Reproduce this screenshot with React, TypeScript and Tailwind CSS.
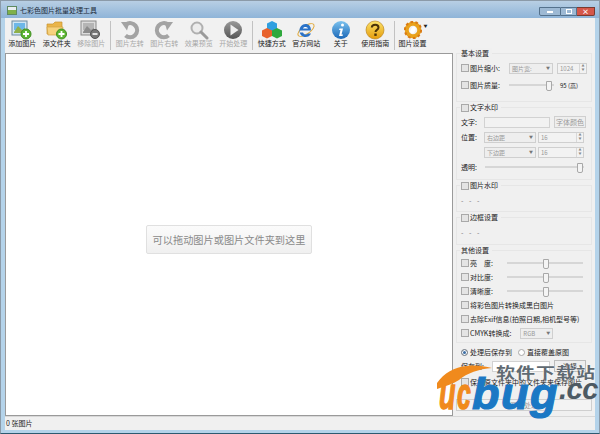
import type { ReactNode } from "react";

const FONT = "font-['Noto_Sans_CJK_SC','Liberation_Sans',sans-serif]";

function AddPicIcon() {
  return (
    <svg width="22" height="20" viewBox="0 0 22 20">
      <rect x="1" y="1" width="15" height="14" fill="#cfe6f5" stroke="#6f8aa0" />
      <rect x="3" y="3" width="11" height="7" fill="#6db7e8" />
      <path d="M3 12 L7 6 L11 10 L14 8 V13 H3Z" fill="#8fb04a" />
      <circle cx="15" cy="14" r="5" fill="#5cb531" stroke="#3f8f1f" />
      <path d="M15 11v6M12 14h6" stroke="#fff" strokeWidth="1.8" />
    </svg>
  );
}

function FolderIcon() {
  return (
    <svg width="22" height="20" viewBox="0 0 22 20">
      <path d="M1 4 H7 L9 2 H16 V14 H1Z" fill="#eab54a" stroke="#c8922f" strokeWidth=".7" />
      <path d="M1 7 H17 L16 15 H2Z" fill="#f6d27e" stroke="#d3a244" strokeWidth=".7" />
      <circle cx="15.5" cy="14" r="5" fill="#5cb531" stroke="#3f8f1f" />
      <path d="M15.500 11v6M12.500 14h6" stroke="#fff" strokeWidth="1.8" />
    </svg>
  );
}

function RemoveIcon() {
  return (
    <svg width="22" height="20" viewBox="0 0 22 20">
      <rect x="1" y="1" width="15" height="14" fill="#dcdcdc" stroke="#8a8a8a" />
      <rect x="3" y="3" width="11" height="7" fill="#b5b5b5" />
      <path d="M3 12 L7 6 L11 10 L14 8 V13 H3Z" fill="#8c8c8c" />
      <circle cx="15" cy="14" r="4.500" fill="#777" stroke="#555" />
      <path d="M12.500 14h5" stroke="#fff" strokeWidth="1.6" />
    </svg>
  );
}

function RotateIcon({ flip }: { flip?: boolean }) {
  return (
    <svg width="20" height="20" viewBox="0 0 20 20" className={flip ? "-scale-x-100" : ""}>
      <path d="M6 4.500 A7 7 0 1 1 5.500 15.500" fill="none" stroke="#a3a3a3" strokeWidth="4.200" />
      <path d="M1 2 L9.500 2 L7 10.500Z" fill="#a3a3a3" />
    </svg>
  );
}

function ZoomIcon() {
  return (
    <svg width="20" height="20" viewBox="0 0 20 20">
      <circle cx="8" cy="8" r="5.500" fill="#ececec" stroke="#b0b0b0" strokeWidth="2" />
      <path d="M12 12 L18 18" stroke="#9a9a9a" strokeWidth="3" strokeLinecap="round" />
    </svg>
  );
}

function PlayIcon() {
  return (
    <svg width="20" height="20" viewBox="0 0 20 20">
      <defs>
        <linearGradient id="pl" x1="0" y1="0" x2="0" y2="1">
          <stop offset="0" stopColor="#9a9a9a" />
          <stop offset="1" stopColor="#555" />
        </linearGradient>
      </defs>
      <circle cx="10" cy="10" r="9" fill="url(#pl)" />
      <path d="M7.500 4.500 L15.500 10 L7.500 15.500Z" fill="#eee" />
    </svg>
  );
}

function CubesIcon() {
  return (
    <svg width="22" height="20" viewBox="0 0 22 20">
      <path d="M11 1 L16 3.500 V9 L11 11.500 L6 9 V3.500Z" fill="#2f9fe0" />
      <path d="M6 8 L11 10.500 V16 L6 18.500 L1 16 V10.500Z" fill="#e8622c" />
      <path d="M16 8 L21 10.500 V16 L16 18.500 L11 16 V10.500Z" fill="#2fa83c" />
    </svg>
  );
}

function IeIcon() {
  return (
    <svg width="20" height="20" viewBox="0 0 20 20">
      <ellipse cx="10" cy="10" rx="9.500" ry="4" fill="none" stroke="#e0a93c" strokeWidth="1" transform="rotate(-35 10 10)" />
      <path d="M4 10.500 H15 C15 6 12.500 4 9.500 4 C6 4 3.500 7 3.500 10.500 C3.500 14.500 6 17 9.500 17 C12 17 14 16 15 13.500 H12 C11 15 8 15 7 12.500 H4" fill="#2a72c8" />
      <path d="M7 8.500 C7.500 6.500 11 6.500 12 8.500Z" fill="#fff" />
    </svg>
  );
}

function InfoIcon() {
  return (
    <svg width="20" height="20" viewBox="0 0 20 20">
      <defs>
        <linearGradient id="inf" x1="0" y1="0" x2="0" y2="1">
          <stop offset="0" stopColor="#7cc2ee" />
          <stop offset="1" stopColor="#1a68b8" />
        </linearGradient>
      </defs>
      <circle cx="10" cy="10" r="9" fill="url(#inf)" />
      <circle cx="11.500" cy="5" r="1.500" fill="#fff" />
      <path d="M8.500 8.500 H12 L10.500 14.500 H12 L11.500 16 H8 L9.500 10 H8Z" fill="#fff" />
    </svg>
  );
}

function HelpIcon() {
  return (
    <svg width="20" height="20" viewBox="0 0 20 20">
      <defs>
        <linearGradient id="hp" x1="0" y1="0" x2="0" y2="1">
          <stop offset="0" stopColor="#fbe36a" />
          <stop offset="1" stopColor="#e59c0c" />
        </linearGradient>
      </defs>
      <circle cx="10" cy="10" r="9" fill="url(#hp)" stroke="#b57c10" strokeWidth=".6" />
      <path d="M6.800 7.500 C7 3.800 13.500 3.800 13.500 7.500 C13.500 10 10.500 9.800 10.500 12" fill="none" stroke="#4a3208" strokeWidth="2" />
      <rect x="9.300" y="13.500" width="2.400" height="2.400" fill="#4a3208" />
    </svg>
  );
}

function GearIcon() {
  return (
    <svg width="18" height="18" viewBox="0 0 20 20">
      <circle cx="10" cy="10" r="7" fill="none" stroke="#e9a21c" strokeWidth="4.500" />
      <circle cx="10" cy="10" r="9" fill="none" stroke="#d97a14" strokeWidth="2.200" strokeDasharray="3 2.600" />
      <ellipse cx="10" cy="10" rx="2.500" ry="4" fill="#fff" transform="rotate(30 10 10)" />
    </svg>
  );
}

function ToolItem({ icon, label, off, w = "w-[34.500px]" }: { icon: ReactNode; label: string; off?: boolean; w?: string }) {
  return (
    <div className={`flex flex-col items-center ${w}`}>
      <div className="h-[19px] flex items-center justify-center">{icon}</div>
      <span className={`text-[7px] leading-[10px] -mt-[1px] whitespace-nowrap ${off ? "text-[#a8a8a8]" : "text-[#222]"}`}>
        {label}
      </span>
    </div>
  );
}

function Sep() {
  return <div className="w-px h-[29px] bg-[#c2c2c2] mx-[1.500px] mt-[1px]" />;
}

function Check({ label }: { label?: string }) {
  return (
    <span className="flex items-center gap-[1px] whitespace-nowrap">
      <span className="w-[8px] h-[8px] border border-[#a9a9a9] bg-[#e4e4e4] shrink-0" />
      {label && <span>{label}</span>}
    </span>
  );
}

function Combo({ label, w }: { label: string; w: string }) {
  return (
    <span className={`${w} h-[11px] border border-[#cfcfcf] bg-[#eeeeee] flex items-center justify-between px-[2px] text-[#999] text-[6px] shrink-0`}>
      {label}
      <span className="text-[4px] text-[#777]">▼</span>
    </span>
  );
}

function Spin({ value, w }: { value: string; w: string }) {
  return (
    <span className={`${w} h-[11px] border border-[#cfcfcf] bg-[#f2f2f2] flex items-center justify-between pl-[2px] text-[#999] text-[6px] shrink-0`}>
      {value}
      <span className="w-[7px] h-full border-l border-[#d8d8d8] text-[3px] leading-[4.500px] text-center text-[#888]">
        ▲<br />▼
      </span>
    </span>
  );
}

function Slider({ w, pos }: { w: string; pos: string }) {
  return (
    <span className={`relative ${w} h-[11px] flex items-center shrink-0`}>
      <span className="w-full h-[2px] bg-[#d6d6d6]" />
      <span className={`absolute ${pos} top-[1px] w-[6px] h-[10px] border border-[#a8a8a8] bg-[#f4f4f4] rounded-b-[2px]`} />
    </span>
  );
}

function Group({ title, children, h, pt = "pt-[8px]" }: { title: ReactNode; children?: ReactNode; h: string; pt?: string }) {
  return (
    <div className={`relative border border-[#e6e6e6] px-[4px] mb-[5px] ${h}`}>
      <div className="absolute -top-[6px] left-[3px] bg-[#f0f0f0] pr-[3px] pl-[1px] h-[11px] flex items-center whitespace-nowrap">
        {title}
      </div>
      <div className={pt}>{children}</div>
    </div>
  );
}

function Row({ children, className = "" }: { children: ReactNode; className?: string }) {
  return <div className={`flex items-center h-[14px] ${className}`}>{children}</div>;
}

function Dots() {
  return <div className="text-[#777] tracking-[2px] leading-[10px] pt-[1px]">- - -</div>;
}

export default function App() {
  return (
    <div className={`${FONT} relative w-[600px] h-[434px] overflow-hidden bg-[#b4d3ea] flex flex-col text-[7px] text-[#222] border border-[#8b9aa8] border-b-[#2c5a70]`}>
      {/* title bar */}
      <div className="h-[17px] shrink-0 flex items-start justify-between pl-[6px] pr-[4px] bg-gradient-to-b from-[#b8cfe4] to-[#8fb4d8]">
        <div className="flex items-center gap-[3px] mt-[5px]">
          <span className="w-[10px] h-[9px] bg-[#e9eef0] border border-[#5f8a60] flex items-end">
            <span className="w-full h-[4px] bg-[#7fb04a]" />
          </span>
          <span className="text-[7px] leading-[9px] text-[#1c2b3a]">七彩色图片批量处理工具</span>
        </div>
        <div className="flex mt-[6px]">
          <span className="w-[22px] h-[9px] border border-[#54718c] rounded-bl-[2px] bg-[#9db9d4] flex items-center justify-center">
            <span className="w-[6px] h-[2px] bg-white" />
          </span>
          <span className="w-[16px] h-[9px] border-y border-r border-[#54718c] bg-[#9db9d4] flex items-center justify-center">
            <span className="w-[6px] h-[5px] border border-white" />
          </span>
          <span className="w-[18px] h-[9px] border-y border-r border-[#7a3b30] rounded-br-[2px] bg-[#d5574a] flex items-center justify-center text-white text-[7px] leading-none font-bold">
            ×
          </span>
        </div>
      </div>

      {/* toolbar */}
      <div className="h-[35px] shrink-0 mx-[4px] bg-[#f1f1f1] flex items-start pt-[2px]">
        <ToolItem icon={<AddPicIcon />} label="添加图片" />
        <ToolItem icon={<FolderIcon />} label="添文件夹" />
        <ToolItem icon={<RemoveIcon />} label="移除图片" off />
        <Sep />
        <ToolItem icon={<RotateIcon />} label="图片左转" off />
        <ToolItem icon={<RotateIcon flip />} label="图片右转" off />
        <ToolItem icon={<ZoomIcon />} label="效果预览" off />
        <ToolItem icon={<PlayIcon />} label="开始处理" off />
        <Sep />
        <ToolItem icon={<CubesIcon />} label="快捷方式" />
        <ToolItem icon={<IeIcon />} label="官方网站" />
        <ToolItem icon={<InfoIcon />} label="关于" />
        <ToolItem icon={<HelpIcon />} label="使用指南" />
        <Sep />
        <div className="relative">
          <ToolItem icon={<GearIcon />} label="图片设置" w="w-[32px]" />
          <span className="absolute left-[27px] top-[3px] text-[4px] text-[#222]">▼</span>
        </div>
      </div>

      {/* content */}
      <div className="flex-1 min-h-0 mx-[4px] bg-[#f0f0f0] flex">
        <div className="w-[448px] border border-[#9a9a9a] bg-white flex items-center justify-center shrink-0">
          <div className="h-[29px] w-[166px] mt-[10px] rounded-[2px] border border-[#e0e0e0] bg-gradient-to-b from-[#fbfbfb] to-[#f0f0f0] flex items-center justify-center text-[10.200px] text-[#8a8a8a] whitespace-nowrap">
            可以拖动图片或图片文件夹到这里
          </div>
        </div>

        {/* right panel */}
        <div className="flex-1 min-w-0 pl-[3px] pr-[3px]">
          <Group title="基本设置" h="h-[49px]" pt="pt-[7px]">
            <Row>
              <span className="w-[48px]">
                <Check label="图片缩小:" />
              </span>
              <Combo label="图片宽:" w="w-[44px]" />
              <span className="w-[4px]" />
              <Spin value="1024" w="w-[30px]" />
            </Row>
            <Row className="mt-[3px]">
              <span className="w-[48px]">
                <Check label="图片质量:" />
              </span>
              <Slider w="w-[45px]" pos="left-[37px]" />
              <span className="ml-[6px] text-[6px] whitespace-nowrap">95 (高)</span>
            </Row>
          </Group>
          <Group title={<Check label="文字水印" />} h="h-[73px]" pt="pt-[7px]">
            <Row>
              <span className="w-[23px]">文字:</span>
              <span className="w-[66px] h-[11px] border border-[#d2d2d2] bg-[#f2f2f2]" />
              <span className="w-[32px] h-[12px] ml-[4px] border border-[#cfcfcf] bg-[#eeeeee] text-[#999] flex items-center justify-center whitespace-nowrap">
                字体颜色
              </span>
            </Row>
            <Row className="mt-[1px]">
              <span className="w-[23px]">位置:</span>
              <Combo label="右边距" w="w-[52px]" />
              <span className="w-[2px]" />
              <Spin value="16" w="w-[46px]" />
            </Row>
            <Row className="mt-[1px]">
              <span className="w-[23px]" />
              <Combo label="下边距" w="w-[52px]" />
              <span className="w-[2px]" />
              <Spin value="16" w="w-[46px]" />
            </Row>
            <Row className="mt-[1px]">
              <span className="w-[24px]">透明:</span>
              <Slider w="w-[99px]" pos="left-[92px]" />
            </Row>
          </Group>
          <Group title={<Check label="图片水印" />} h="h-[27px]">
            <Dots />
          </Group>
          <Group title={<Check label="边框设置" />} h="h-[28px]">
            <Dots />
          </Group>
          <div className="-mb-[3px]">
            <Group title="其他设置" h="h-[93px]" pt="pt-[5px]">
              {["亮　度:", "对比度:", "清晰度:"].map((label) => (
                <Row key={label}>
                  <span className="w-[46px]">
                    <Check label={label} />
                  </span>
                  <Slider w="w-[76px]" pos="left-[36px]" />
                </Row>
              ))}
              <Row>
                <Check label="将彩色图片转换成黑白图片" />
              </Row>
              <Row>
                <Check label="去除Exif信息(拍照日期,相机型号等)" />
              </Row>
              <Row className="gap-[9px]">
                <Check label="CMYK转换成:" />
                <Combo label="RGB" w="w-[33px]" />
              </Row>
            </Group>
          </div>
          <div className="pl-[5px]">
            <Row>
              <span className="flex items-center gap-[2px] w-[57px]">
                <span className="w-[7px] h-[7px] rounded-full border border-[#8a8a8a] bg-[#3c6ea5] shadow-[inset_0_0_0_1px_#fff]" />
                处理后保存到
              </span>
              <span className="flex items-center gap-[2px]">
                <span className="w-[7px] h-[7px] rounded-full border border-[#a8a8a8] bg-white" />
                直接覆盖原图
              </span>
            </Row>
            <Row>
              <span className="w-[31px]">保存到:</span>
              <span className="w-[58px] h-[11px] border border-[#d2d2d2] bg-white" />
              <span className="w-[32px] h-[12px] ml-[4px] border border-[#bdbdbd] bg-[#eeeeee] flex items-center justify-center">
                选择
              </span>
            </Row>
            <Row className="mt-[2px]">
              <Check label="保持原文件夹中的文件夹来保存图片" />
            </Row>
          </div>
          <div className="mt-[10px] h-[12px] w-[136px] border border-[#cfcfcf] bg-[#f3f3f3] text-[#999] flex items-center justify-center">
            开始处理
          </div>
        </div>
      </div>

      {/* status bar */}
      <div className="h-[14px] shrink-0 mx-[4px] bg-[#f0f0f0] flex items-center px-[1px] border-t border-[#d8d8d8] text-[7px]">
        0 张图片
      </div>
      <div className="h-[3px] shrink-0" />

      {/* watermark */}
      <div className="absolute left-[438px] top-[352px] w-[160px] h-[74px] pointer-events-none">
        <span className="absolute left-[57px] top-[9px] text-[19px] leading-[20px] font-bold text-[#5f6a72] tracking-[1px] whitespace-nowrap scale-y-[0.75] [text-shadow:0_0_2px_#fff]">
          软件下载站
        </span>
        <span className="absolute left-0 top-[16px] text-[45px] leading-[50px] font-['Liberation_Sans',sans-serif] font-bold italic text-[#f08a1d] [-webkit-text-stroke:1.500px_#f08a1d] scale-x-[0.6] origin-left">
          u
        </span>
        <span className="absolute left-[18px] top-[16px] text-[45px] leading-[50px] font-['Liberation_Sans',sans-serif] font-bold italic text-[#f08a1d] [-webkit-text-stroke:1.500px_#f08a1d] scale-x-[0.55] origin-left">
          c
        </span>
        <svg className="absolute left-0 top-0 overflow-visible" width="60" height="46" viewBox="0 0 60 46">
          <path d="M-2 30 C5 20 15 14 28 13 C36 12 45 13 53 15 C40 16 28 20 20 27 C14 31 6 33 -2 36Z" fill="#f08a1d" />
        </svg>
        <span className="absolute left-[33px] top-[16px] text-[45px] leading-[50px] font-['Liberation_Sans',sans-serif] font-bold italic text-[#1b78c4] [-webkit-text-stroke:1.200px_#1b78c4] tracking-[1.500px]">
          bug
        </span>
        <span className="absolute left-[120px] top-[21px] text-[29px] leading-[30px] font-['Liberation_Sans',sans-serif] font-bold italic text-[#4d5a63] tracking-[-0.500px]">
          .cc
        </span>
      </div>
    </div>
  );
}
